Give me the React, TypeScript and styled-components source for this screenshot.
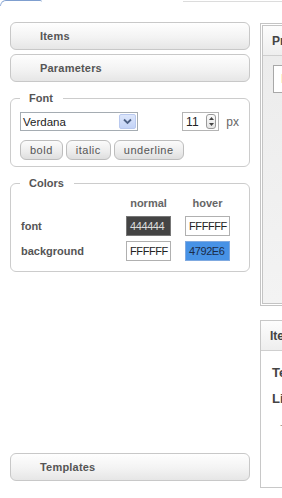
import React from "react";
import styled, { createGlobalStyle } from "styled-components";

const GlobalStyle = createGlobalStyle`
  html, body { margin: 0; padding: 0; background: #ffffff; }
  body { font-family: "Liberation Sans", Arial, sans-serif; font-size: 11px; color: #555555; }
`;

const Page = styled.div`
  width: 282px;
  height: 498px;
  overflow: hidden;
  position: relative;
  background: #ffffff;
`;

const TopStrip = styled.div`
  display: flex;
  height: 3px;
  align-items: flex-start;
`;

const BlueTab = styled.div`
  width: 42px;
  height: 6px;
  box-sizing: border-box;
  border-top: 1px solid #7f9fcf;
  border-left: 1px solid #9db5dc;
  border-top-left-radius: 6px;
  border-top-right-radius: 2px;
`;

const GrayEdge = styled.div`
  margin-left: 141px;
  flex: 1;
  height: 1px;
  margin-top: 1px;
  background: #dcdcdc;
`;

const Main = styled.div`
  display: flex;
  gap: 10px;
  padding: 19px 0 0 10px;
`;

const LeftColumn = styled.div`
  width: 240px;
  flex: none;
  display: flex;
  flex-direction: column;
  height: 459px;
`;

const AccordionHeader = styled.div<{ $gap: string }>`
  box-sizing: border-box;
  height: 28px;
  flex: none;
  border: 1px solid #c8c8c8;
  border-radius: 6px;
  background: linear-gradient(to bottom, #fefefe 0%, #f3f3f3 55%, #e6e6e6 100%);
  display: flex;
  align-items: center;
  padding: 0 0 1px 29px;
  font-weight: bold;
  font-size: 11px;
  letter-spacing: 0.2px;
  color: #555555;
  margin-top: ${(p) => p.$gap};
`;

const FieldBox = styled.fieldset<{ $top: number; $pt: number; $pb: number }>`
  margin: ${(p) => p.$top}px 0 0 0;
  border: 1px solid #cccccc;
  border-radius: 6px;
  padding: ${(p) => p.$pt}px 10px ${(p) => p.$pb}px 9px;
  min-width: 0;
`;

const Legend = styled.legend`
  padding: 0 10px 0 9px;
  font-weight: bold;
  font-size: 11px;
  line-height: 13px;
  color: #555555;
  margin-left: 0;
`;

const FontRow = styled.div`
  display: flex;
  align-items: center;
  height: 19px;
`;

const Select = styled.div`
  box-sizing: border-box;
  width: 121px;
  height: 19px;
  border: 1px solid #a5acb2;
  background: #ffffff;
  display: flex;
  align-items: center;
  justify-content: space-between;
  padding: 0 1px 0 2px;
  font-size: 11.5px;
  color: #222222;
`;

const SelectButton = styled.div`
  box-sizing: border-box;
  width: 17px;
  height: 15px;
  border: 1px solid #b9c9ef;
  border-radius: 2px;
  background: linear-gradient(to bottom, #dce6fb 0%, #c3d3f7 100%);
  display: flex;
  align-items: center;
  justify-content: center;
`;

const SizeBox = styled.div`
  box-sizing: border-box;
  margin-left: 44px;
  width: 38px;
  height: 19px;
  border: 1px solid #b4b4b4;
  display: flex;
  align-items: center;
  padding: 0 2px 0 3px;
  font-size: 12px;
  color: #222222;
  justify-content: space-between;
`;

const Spinner = styled.div`
  box-sizing: border-box;
  width: 10px;
  height: 15px;
  border: 1px solid #9a9a9a;
  border-radius: 3px;
  background: linear-gradient(to bottom, #fafafa, #e4e4e4);
  display: flex;
  flex-direction: column;
  align-items: center;
  justify-content: space-around;
  padding: 1px 0;
`;

const Unit = styled.span`
  margin-left: 7px;
  font-size: 12px;
  color: #666666;
`;

const ButtonRow = styled.div`
  display: flex;
  gap: 3px;
  margin-top: 9px;
`;

const StyleButton = styled.div`
  box-sizing: border-box;
  height: 20px;
  padding: 0 9px;
  border: 1px solid #bdbdbd;
  border-radius: 6px;
  background: linear-gradient(to bottom, #fbfbfb 0%, #ececec 60%, #dedede 100%);
  display: flex;
  align-items: center;
  font-size: 11px;
  letter-spacing: 0.5px;
  color: #555555;
`;

const ColorGrid = styled.div`
  display: grid;
  grid-template-columns: 91px 45px 45px;
  grid-template-rows: 17px 20px 20px;
  column-gap: 14px;
  row-gap: 5px;
  align-items: center;
  padding-left: 1px;
`;

const ColHead = styled.div`
  text-align: center;
  font-weight: bold;
  font-size: 11px;
  color: #666666;
`;

const RowLabel = styled.div`
  font-weight: bold;
  font-size: 11px;
  color: #555555;
`;

const Swatch = styled.div<{ $bg: string; $fg: string; $border: string }>`
  box-sizing: border-box;
  height: 20px;
  border: 1px solid ${(p) => p.$border};
  background: ${(p) => p.$bg};
  color: ${(p) => p.$fg};
  font-size: 11px;
  letter-spacing: -0.4px;
  display: flex;
  align-items: center;
  padding-left: 3px;
  overflow: hidden;
`;

const RightColumn = styled.div`
  width: 240px;
  flex: none;
  display: flex;
  flex-direction: column;
  gap: 14px;
  padding-top: 1px;
`;

const Panel = styled.div<{ $height: number; $double?: boolean }>`
  box-sizing: border-box;
  height: ${(p) => p.$height}px;
  border: ${(p) => (p.$double ? "3px double #c4c4c4" : "1px solid #c8c8c8")};
  display: flex;
  flex-direction: column;
`;

const PanelHeader = styled.div`
  height: 29px;
  flex: none;
  border-bottom: 1px solid #cfcfcf;
  background: linear-gradient(to bottom, #fdfdfd 0%, #eeeeee 100%);
  display: flex;
  align-items: center;
  padding-left: 9px;
  font-weight: bold;
  font-size: 12px;
  color: #444444;
`;

const PreviewBody = styled.div`
  flex: 1;
  background: linear-gradient(to bottom, #ececec 0%, #f3f3f3 100%);
  padding: 9px 0 0 10px;
`;

const PreviewBox = styled.div`
  box-sizing: border-box;
  height: 28px;
  border: 1px solid #a8a8a8;
  background: #ffffff;
  display: flex;
  align-items: center;
  padding-left: 7px;
  font-size: 12px;
  color: #333333;
`;

const InfoBody = styled.div`
  display: flex;
  flex-direction: column;
  padding: 14px 0 0 11px;
  gap: 11px;
`;

const InfoLine = styled.div<{ $muted?: boolean }>`
  font-weight: ${(p) => (p.$muted ? "normal" : "bold")};
  font-size: ${(p) => (p.$muted ? "11px" : "13px")};
  color: ${(p) => (p.$muted ? "#999999" : "#444444")};
  line-height: 15px;
  padding-left: ${(p) => (p.$muted ? "8px" : "0")};
`;

const Chevron = () => (
  <svg width="9" height="7" viewBox="0 0 9 7">
    <path d="M1 1.5 L4.5 5 L8 1.5" fill="none" stroke="#4d6185" strokeWidth="1.8" />
  </svg>
);

const Arrow = ({ up }: { up?: boolean }) => (
  <svg width="5" height="3" viewBox="0 0 5 3">
    <path d={up ? "M0 3 L2.5 0 L5 3 Z" : "M0 0 L2.5 3 L5 0 Z"} fill="#444" />
  </svg>
);

export default function App() {
  return (
    <Page>
      <GlobalStyle />
      <TopStrip>
        <BlueTab />
        <GrayEdge />
      </TopStrip>
      <Main>
        <LeftColumn>
          <AccordionHeader $gap="0">Items</AccordionHeader>
          <AccordionHeader $gap="4px">Parameters</AccordionHeader>
          <FieldBox $top={10} $pt={7} $pb={6}>
            <Legend>Font</Legend>
            <FontRow>
              <Select>
                <span>Verdana</span>
                <SelectButton>
                  <Chevron />
                </SelectButton>
              </Select>
              <SizeBox>
                <span>11</span>
                <Spinner>
                  <Arrow up />
                  <Arrow />
                </Spinner>
              </SizeBox>
              <Unit>px</Unit>
            </FontRow>
            <ButtonRow>
              <StyleButton>bold</StyleButton>
              <StyleButton>italic</StyleButton>
              <StyleButton>underline</StyleButton>
            </ButtonRow>
          </FieldBox>
          <FieldBox $top={10} $pt={4} $pb={10}>
            <Legend>Colors</Legend>
            <ColorGrid>
              <span />
              <ColHead>normal</ColHead>
              <ColHead>hover</ColHead>
              <RowLabel>font</RowLabel>
              <Swatch $bg="#444444" $fg="#dddddd" $border="#777777">444444</Swatch>
              <Swatch $bg="#ffffff" $fg="#222222" $border="#b0b0b0">FFFFFF</Swatch>
              <RowLabel>background</RowLabel>
              <Swatch $bg="#ffffff" $fg="#222222" $border="#b0b0b0">FFFFFF</Swatch>
              <Swatch $bg="#4792E6" $fg="#1b2c48" $border="#7fa9e0">4792E6</Swatch>
            </ColorGrid>
          </FieldBox>
          <AccordionHeader $gap="auto">Templates</AccordionHeader>
        </LeftColumn>
        <RightColumn>
          <Panel $height={283} $double>
            <PanelHeader>Preview</PanelHeader>
            <PreviewBody>
              <PreviewBox>Item</PreviewBox>
            </PreviewBody>
          </Panel>
          <Panel $height={168}>
            <PanelHeader>Item</PanelHeader>
            <InfoBody>
              <InfoLine>Text</InfoLine>
              <InfoLine>Link</InfoLine>
              <InfoLine $muted>-</InfoLine>
            </InfoBody>
          </Panel>
        </RightColumn>
      </Main>
    </Page>
  );
}
